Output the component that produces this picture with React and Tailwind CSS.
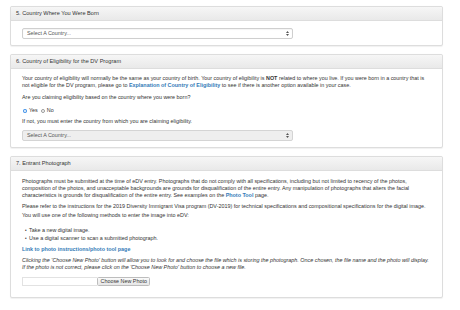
import React from 'react';

function SelectArrows() {
  return (
    <svg width="3" height="5" viewBox="0 0 6 10" className="shrink-0">
      <path d="M3 0 L6 4 H0 Z" fill="#555" />
      <path d="M3 10 L6 6 H0 Z" fill="#555" />
    </svg>
  );
}

function CountrySelect({ disabled }) {
  return (
    <div
      className={`w-[271px] h-[11px] flex items-center justify-between pl-[4px] pr-[3px] border rounded-[2px] text-[5.4px] text-[#555] ${
        disabled
          ? 'bg-[#eeeeee] border-[#d4d4d4]'
          : 'bg-white border-[#cfcfcf] shadow-[inset_0_0.5px_1px_rgba(0,0,0,0.08)]'
      }`}
    >
      <span>Select A Country...</span>
      <SelectArrows />
    </div>
  );
}

function Panel({ title, children, bodyClass }) {
  return (
    <div className="border border-[#dddddd] rounded-[2px] bg-white shadow-[0_0.5px_1px_rgba(0,0,0,0.06)]">
      <div className="h-[14px] flex items-center px-[5px] border-b border-[#dddddd] bg-linear-to-b from-[#f6f6f6] to-[#e9e9e9] text-[5.6px] text-[#333] rounded-t-[2px]">
        {title}
      </div>
      <div className={bodyClass}>{children}</div>
    </div>
  );
}

export default function App() {
  return (
    <div className="w-[460px] h-[310px] overflow-hidden bg-white pt-[6px] pl-[10px] pr-[17px] font-['Liberation_Sans',Arial,sans-serif] text-[#333]">
      {/* 5. Country of birth */}
      <Panel title="5. Country Where You Were Born" bodyClass="pt-[7px] pb-[6px] px-[11px]">
        <CountrySelect />
      </Panel>

      {/* 6. Country of eligibility */}
      <div className="mt-[8px]">
        <Panel title="6. Country of Eligibility for the DV Program" bodyClass="pt-[6px] pb-[6px] px-[11px] text-[5.4px] leading-[7.3px]">
          <p className="whitespace-nowrap">
            Your country of eligibility will normally be the same as your country of birth. Your country of eligibility is <b>NOT</b> related to where you live. If you were born in a country that is
            <br />
            not eligible for the DV program, please go to{' '}
            <a className="text-[#337ab7] font-bold">Explanation of Country of Eligibility</a> to see if there is another option available in your case.
          </p>
          <p className="mt-[4.7px] whitespace-nowrap">Are you claiming eligibility based on the country where you were born?</p>
          <div className="mt-[5.7px] flex items-center h-[7.3px] pl-[0.5px]">
            <span className="w-[4.5px] h-[4.5px] rounded-full bg-[#3b8ee8] flex items-center justify-center">
              <span className="w-[1.6px] h-[1.6px] rounded-full bg-white" />
            </span>
            <span className="ml-[2px]">Yes</span>
            <span className="ml-[3px] w-[4.5px] h-[4.5px] rounded-full border-[0.5px] border-[#9a9a9a] bg-white" />
            <span className="ml-[1.5px]">No</span>
          </div>
          <p className="mt-[3.2px] whitespace-nowrap">If not, you must enter the country from which you are claiming eligibility.</p>
          <div className="mt-[5px]">
            <CountrySelect disabled />
          </div>
        </Panel>
      </div>

      {/* 7. Photograph */}
      <div className="mt-[8px]">
        <Panel title="7. Entrant Photograph" bodyClass="pt-[6.5px] pb-[11px] px-[11px] text-[5.4px] leading-[7.3px]">
          <p className="whitespace-nowrap">
            Photographs must be submitted at the time of eDV entry. Photographs that do not comply with all specifications, including but not limited to recency of the photos,
            <br />
            composition of the photos, and unacceptable backgrounds are grounds for disqualification of the entire entry. Any manipulation of photographs that alters the facial
            <br />
            characteristics is grounds for disqualification of the entire entry. See examples on the{' '}
            <a className="text-[#337ab7] font-bold">Photo Tool</a> page.
          </p>
          <p className="mt-[3.2px] whitespace-nowrap">
            Please refer to the instructions for the 2019 Diversity Immigrant Visa program (DV-2019) for technical specifications and compositional specifications for the digital image.
          </p>
          <p className="mt-[1.8px] whitespace-nowrap">You will use one of the following methods to enter the image into eDV:</p>
          <ul className="mt-[8px] pl-[3px]">
            <li className="flex items-center gap-[2.5px]">
              <span className="text-[4.5px] text-[#333]">•</span>Take a new digital image.
            </li>
            <li className="mt-[0.5px] flex items-center gap-[2.5px]">
              <span className="text-[4.5px] text-[#333]">•</span>Use a digital scanner to scan a submitted photograph.
            </li>
          </ul>
          <a className="block mt-[4px] text-[#337ab7] font-bold">Link to photo instructions/photo tool page</a>
          <p className="mt-[3.6px] italic whitespace-nowrap">
            Clicking the 'Choose New Photo' button will allow you to look for and choose the file which is storing the photograph. Once chosen, the file name and the photo will display.
            <br />
            If the photo is not correct, please click on the 'Choose New Photo' button to choose a new file.
          </p>
          <div className="mt-[5.5px] flex items-center h-[8.5px]">
            <div className="w-[75px] h-full border border-r-0 border-[#e2e2e2] bg-white" />
            <button className="h-full px-[2.5px] border border-[#bdbdbd] rounded-[1.5px] bg-linear-to-b from-[#fafafa] to-[#e6e6e6] text-[5.4px] leading-none text-[#333]">
              Choose New Photo
            </button>
          </div>
        </Panel>
      </div>
    </div>
  );
}
